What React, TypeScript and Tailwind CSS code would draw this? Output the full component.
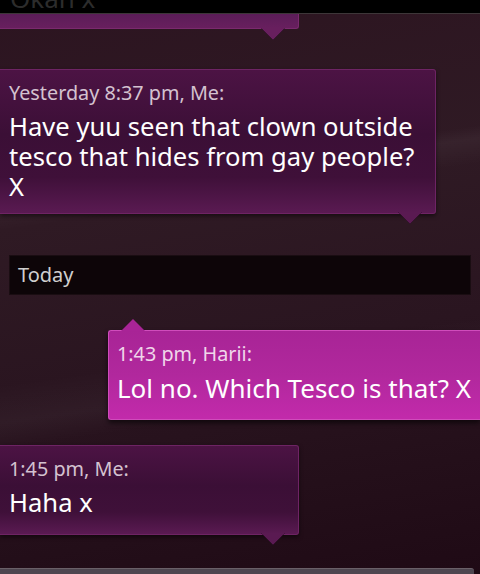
import React from 'react';

const font = { fontFamily: '"Noto Sans", "Open Sans", sans-serif' };

function TailDown({ color, className }: { color: string; className: string }) {
  return (
    <svg className={className} width="24" height="13" viewBox="0 0 24 13">
      <path d="M0 0 L12 12 L24 0 Z" fill={color} />
      <path d="M0 0 L12 12 L24 0" fill="none" stroke="rgba(0,0,0,0.25)" strokeWidth="1" />
    </svg>
  );
}

function TailUp({ color, className }: { color: string; className: string }) {
  return (
    <svg className={className} width="24" height="13" viewBox="0 0 24 13">
      <path d="M0 13 L12 1 L24 13 Z" fill={color} />
    </svg>
  );
}

function MeBubble({ meta, children, className }: { meta: string; children: React.ReactNode; className: string }) {
  return (
    <div
      className={`relative rounded-tr-[3px] rounded-br-[3px] border border-l-0 border-[#6e2464] bg-[linear-gradient(to_bottom,#4c1344_0%,#3b0f36_45%,#3f1039_75%,#5a1a52_100%)] shadow-[0_2px_4px_rgba(0,0,0,0.5)] ${className}`}
    >
      <div className="text-[19.8px] leading-[24px] text-[#d4c2d0]">{meta}</div>
      <div className="mt-[7px] text-[25.6px] leading-[30px] text-white">{children}</div>
      <TailDown color="#5a1a52" className="absolute -bottom-[12px] right-[13px]" />
    </div>
  );
}

export default function App() {
  return (
    <div
      style={font}
      className="relative w-[480px] h-[574px] overflow-hidden flex flex-col bg-[linear-gradient(170deg,#2c1420_0%,#2f1a24_35%,#2a1520_60%,#1f0a15_100%)]"
    >
      {/* streaks */}
      <div className="absolute inset-0 pointer-events-none bg-[linear-gradient(172deg,transparent_30%,rgba(255,255,255,0.04)_32%,transparent_36%,transparent_60%,rgba(255,255,255,0.035)_66%,transparent_70%)]" />

      {/* previous thread header remnant */}
      <div className="relative h-[14px] bg-black border-b border-[#3d3638] overflow-hidden flex items-start shrink-0">
        <span className="pl-[10px] text-[26px] leading-[26px] -mt-[15px] text-[#2c2c2c]">Okan x</span>
      </div>

      {/* tail end of previous bubble */}
      <div className="relative w-[299px] h-[15px] shrink-0 rounded-br-[3px] border-b border-r border-[#7a2a6e] bg-[linear-gradient(to_bottom,#5b1d58,#681f5e)]">
        <TailDown color="#681f5e" className="absolute -bottom-[13px] right-[13px]" />
      </div>

      <MeBubble meta="Yesterday 8:37 pm, Me:" className="mt-[40px] w-[436px] h-[145px] pl-[9px] pt-[11px] shrink-0">
        Have yuu seen that clown outside tesco that hides from gay people? X
      </MeBubble>

      <div className="relative mt-[41px] mx-[9px] h-[40px] shrink-0 bg-[#0d0508] border border-[#1a0d12] flex items-center pl-[8px]">
        <span className="text-[20px] text-[#cfcfcf]">Today</span>
      </div>

      <div className="relative mt-[35px] ml-[108px] h-[90px] shrink-0 rounded-tl-[3px] rounded-bl-[3px] border border-r-0 border-[#d04cbc] bg-[linear-gradient(to_bottom,#a82496_0%,#b1289d_50%,#c22aab_100%)] shadow-[0_3px_5px_rgba(0,0,0,0.6)] pl-[8px] pt-[11px]">
        <TailUp color="#a92497" className="absolute -top-[13px] left-[12px]" />
        <div className="text-[19.8px] leading-[24px] text-[#f0d6ea]">1:43 pm, Harii:</div>
        <div className="mt-[6px] text-[26px] leading-[32px] text-white whitespace-nowrap">Lol no. Which Tesco is that? X</div>
      </div>

      <MeBubble meta="1:45 pm, Me:" className="mt-[25px] w-[299px] h-[90px] pl-[9px] pt-[11px] shrink-0">
        Haha x
      </MeBubble>

      {/* compose field top edge */}
      <div className="mt-auto h-[6px] w-[474px] shrink-0 rounded-tr-[3px] bg-[#4e4650] border-t border-[#6a6068]" />
    </div>
  );
}
